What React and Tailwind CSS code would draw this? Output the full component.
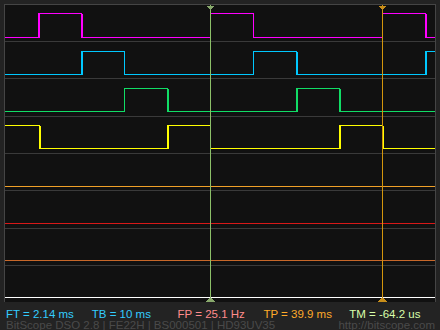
const TRACES = [
  {
    color: '#ff00ff',
    d: 'M4 37 H38 V13 H81 V37 H210 V13 H253 V37 H382 V13 H425 V37 H434',
    thick: [[38, 13, 37], [81, 13, 37], [425, 13, 37]]
  },
  {
    color: '#00c8ff',
    d: 'M4 74 H81 V51 H124 V74 H253 V51 H296 V74 H425 V51 H434',
    thick: [[81, 51, 74], [296, 51, 74], [425, 51, 74]]
  },
  {
    color: '#11dd66',
    d: 'M4 111 H124 V88 H167 V111 H296 V88 H339 V111 H434',
    thick: [[167, 88, 111], [296, 88, 111], [339, 88, 111]]
  },
  {
    color: '#ffff00',
    d: 'M4 125 H39 V148 H167 V125 H210 V148 H339 V125 H382 V148 H434',
    thick: [[39, 125, 148], [167, 125, 148], [339, 125, 148], [382, 125, 148]]
  }
]

const LEVELS = [
  { y: 186, color: '#f0a028' },
  { y: 223, color: '#d81818' },
  { y: 260, color: '#c8682a' },
  { y: 297, color: '#ffffff' }
]

const GRID = [41, 78, 116, 153, 190, 228, 265]

const CURSORS = [
  { x: 210, line: '#8cc068', mark: '#88a86c' },
  { x: 382, line: '#d4960c', mark: '#c88e1a' }
]

const READOUTS = [
  { label: 'FT = 2.14 ms', color: 'text-[#33ccff]' },
  { label: 'TB = 10 ms', color: 'text-[#33ccff]' },
  { label: 'FP = 25.1 Hz', color: 'text-[#ff8c8c]' },
  { label: 'TP = 39.9 ms', color: 'text-[#ffaa2a]' },
  { label: 'TM = -64.2 us', color: 'text-[#d8ffaa]' }
]

// drawn in page coordinates, shifted so the svg origin sits inside the plot border
const Scope = () => (
  <svg width="430" height="297" className="block" shapeRendering="crispEdges">
    <g transform="translate(-4.5,-4.5)">
      {GRID.map(y => (
        <line key={y} x1="4" x2="436" y1={y} y2={y} stroke="#3a3a3a" strokeWidth="1" />
      ))}
      {LEVELS.map(l => (
        <line key={l.y} x1="4" x2="434" y1={l.y} y2={l.y} stroke={l.color} strokeWidth="1" />
      ))}
      {TRACES.map(t => (
        <g key={t.color}>
          <path d={t.d} fill="none" stroke={t.color} strokeWidth="1" />
          {t.thick.map(([x, y1, y2]) => (
            <line key={x} x1={x + 1} x2={x + 1} y1={y1} y2={y2} stroke={t.color} strokeWidth="1" />
          ))}
        </g>
      ))}
      {CURSORS.map(c => (
        <g key={c.x}>
          <line x1={c.x} x2={c.x} y1="4" y2="302" stroke={c.line} strokeWidth="1" />
          <path d={`M${c.x - 4.5} 5 H${c.x + 4.5} L${c.x} 9.5 Z`} fill={c.mark} stroke="none" />
          <path d={`M${c.x - 4.5} 301 H${c.x + 4.5} L${c.x} 296.5 Z`} fill={c.mark} stroke="none" />
        </g>
      ))}
    </g>
  </svg>
)

const App = () => {
  return (
    <div
      className="w-[440px] h-[330px] overflow-hidden bg-[#232323] flex flex-col"
      style={{ fontFamily: '"Liberation Sans", Arial, sans-serif' }}
    >
      <div className="mt-[4px] ml-[4px] w-[430px] h-[297px] box-content bg-[#111111] border-l border-t border-r border-[#454545]">
        <Scope />
      </div>

      <div className="pt-[6px] pl-[6px] pr-[5px] text-[11.5px]">
        <div className="grid grid-cols-5 leading-[12px] h-[12px]">
          {READOUTS.map(r => (
            <span key={r.label} className={`${r.color} whitespace-nowrap`}>
              {r.label}
            </span>
          ))}
        </div>
        <div className="flex justify-between leading-[12px] -mt-[1px] text-[#4a4a4a]">
          <span>BitScope DSO 2.8 | FE22H | BS000501 | HD93UV35</span>
          <span>http://bitscope.com</span>
        </div>
      </div>
    </div>
  )
}

export default App
